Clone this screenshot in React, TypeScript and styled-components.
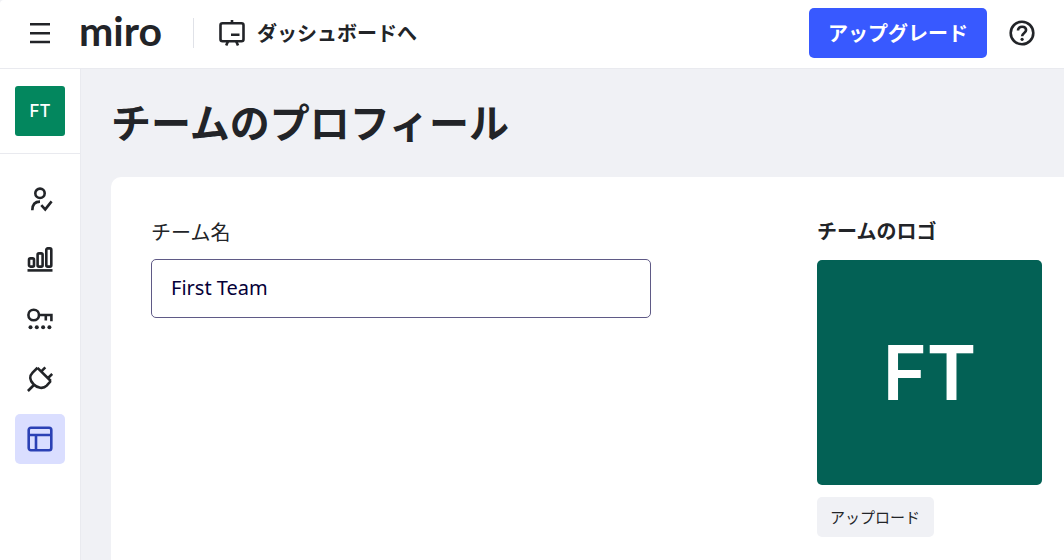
import React from "react";
import styled, { createGlobalStyle } from "styled-components";

const GlobalStyle = createGlobalStyle`
  *, *::before, *::after { box-sizing: border-box; }
  body {
    margin: 0;
    background: #f0f1f5;
    color: #222428;
    font-family: "Noto Sans", "Noto Sans CJK JP", sans-serif;
    font-size: 20px;
    line-height: 30px;
  }
  button, input { font: inherit; color: inherit; }
  h1, h2 { margin: 0; }
`;

const Page = styled.div`
  min-height: 100vh;
  display: flex;
  flex-direction: column;
`;

const Header = styled.header`
  display: flex;
  align-items: center;
  padding: 8px 29px 10px;
  background: #fff;
  border-bottom: 1px solid #e9eaef;
  border-top-left-radius: 4px;
`;

const IconButton = styled.button`
  display: flex;
  padding: 0;
  border: 0;
  background: none;
  cursor: pointer;
`;

const Logo = styled.a`
  margin-left: 28px;
  padding-bottom: 4px;
  color: #222428;
  font-family: Lato, sans-serif;
  font-size: 41px;
  font-weight: 700;
  line-height: 46px;
  text-decoration: none;
`;

const Divider = styled.div`
  width: 1px;
  height: 30px;
  margin: 0 25px 0 31px;
  background: #e0e2e8;
`;

const DashboardLink = styled.a`
  display: flex;
  align-items: center;
  gap: 12px;
  color: #222428;
  font-family: "Noto Sans CJK JP", sans-serif;
  font-weight: 700;
  text-decoration: none;
`;

const HeaderActions = styled.div`
  display: flex;
  align-items: center;
  gap: 22px;
  margin-left: auto;
`;

const UpgradeButton = styled.button`
  height: 50px;
  padding: 0 19px;
  border: 0;
  border-radius: 5px;
  background: #3859ff;
  color: #fff;
  font-family: "Noto Sans CJK JP", sans-serif;
  font-weight: 700;
  cursor: pointer;
`;

const Body = styled.div`
  display: flex;
  flex: 1;
`;

const Sidebar = styled.aside`
  flex: none;
  width: 81px;
  background: #fff;
  border-right: 1px solid #e9eaef;
`;

const TeamSlot = styled.div`
  display: flex;
  justify-content: center;
  padding: 17px 0;
  border-bottom: 1px solid #e9eaef;
`;

const Avatar = styled.div<{ $large?: boolean }>`
  display: flex;
  align-items: center;
  justify-content: center;
  width: ${(p) => (p.$large ? 225 : 50)}px;
  height: ${(p) => (p.$large ? 225 : 50)}px;
  border-radius: ${(p) => (p.$large ? 5 : 3)}px;
  background: ${(p) => (p.$large ? "#036155" : "#03875e")};
  color: #fff;
  font-family: Inter, sans-serif;
  font-size: ${(p) => (p.$large ? 75 : 17)}px;
  font-weight: ${(p) => (p.$large ? 600 : 500)};
  line-height: 1;
`;

const Nav = styled.nav`
  display: flex;
  flex-direction: column;
  align-items: center;
  gap: 10px;
  padding-top: 20px;
`;

const NavLink = styled.a<{ $active?: boolean }>`
  display: flex;
  align-items: center;
  justify-content: center;
  width: 50px;
  height: 50px;
  border-radius: 5px;
  color: ${(p) => (p.$active ? "#2b41b5" : "#222428")};
  background: ${(p) => (p.$active ? "#dadeff" : "transparent")};
`;

const Main = styled.main`
  display: flex;
  flex-direction: column;
  flex: 1;
  min-width: 0;
  padding: 22px 0 0 30px;
`;

const Title = styled.h1`
  font-family: "Noto Sans CJK JP", sans-serif;
  font-size: 40px;
  font-weight: 700;
  line-height: 60px;
`;

const Card = styled.section`
  display: flex;
  justify-content: space-between;
  gap: 40px;
  flex: 1;
  margin-top: 26px;
  padding: 40px 22px 23px 40px;
  border-top-left-radius: 10px;
  background: #fff;
`;

const Field = styled.div`
  display: flex;
  flex-direction: column;
  flex: 0 1 500px;
  min-width: 0;
`;

const Label = styled.label`
  margin-bottom: 12px;
  font-family: "Noto Sans CJK JP", sans-serif;
`;

const TextInput = styled.input`
  width: 100%;
  height: 59px;
  padding: 0 19px 2px;
  border: 1px solid #5f5a86;
  border-radius: 5px;
  background: #fff;
  color: #050038;
`;

const LogoPanel = styled.div`
  display: flex;
  flex-direction: column;
  align-items: flex-start;
  flex: none;
`;

const PanelTitle = styled.h2`
  margin-bottom: 15px;
  font-family: "Noto Sans CJK JP", sans-serif;
  font-size: 20px;
  font-weight: 700;
  line-height: 28px;
`;

const UploadButton = styled.button`
  height: 40px;
  margin-top: 12px;
  padding: 0 14px 0 13px;
  border: 0;
  border-radius: 5px;
  background: #f0f1f5;
  font-family: "Noto Sans CJK JP", sans-serif;
  font-size: 15px;
  cursor: pointer;
`;

function Icon({ children }: { children: React.ReactNode }) {
  return (
    <svg width="26" height="26" viewBox="0 0 26 26" fill="none" stroke="currentColor" strokeWidth="2.6" aria-hidden="true">
      {children}
    </svg>
  );
}

const navItems = [
  {
    label: "ユーザー",
    icon: (
      <>
        <circle cx="13" cy="7.3" r="4.7" />
        <path d="M5.3 24.2c0-5.4 2.8-8.6 7.7-8.6M14.3 19.2l3.9 4.2 6.4-8" />
      </>
    ),
  },
  {
    label: "統計",
    icon: (
      <>
        <rect x="2" y="12.4" width="5" height="8.2" rx="1.4" />
        <rect x="10.6" y="7.4" width="5" height="13.2" rx="1.4" />
        <rect x="19.3" y="2.4" width="5" height="18.2" rx="1.4" />
        <path d="M.5 24.4h25" />
      </>
    ),
  },
  {
    label: "セキュリティ",
    icon: (
      <>
        <circle cx="6.7" cy="9" r="5.3" />
        <path d="M12 9h12.4v6.3M18.8 9v5.4" />
        <g fill="currentColor" stroke="none">
          <circle cx="3.5" cy="21.2" r="2" />
          <circle cx="9.8" cy="21.2" r="2" />
          <circle cx="16.1" cy="21.2" r="2" />
          <circle cx="22.4" cy="21.2" r="2" />
        </g>
      </>
    ),
  },
  {
    label: "アプリ",
    icon: (
      <path
        d="M.9 25l7-7M10.5 1.8l13.3 13.2M14.3 5.4l4-4M20.8 12.2l4.4-4.2M10.5 1.8L5.6 6.6c-3.4 3.5-2.9 8 .9 11.7 3.8 3.8 9.6 5 13.2 1.4l4.1-4.7"
        strokeLinejoin="round"
      />
    ),
  },
  {
    label: "プロフィール",
    active: true,
    icon: (
      <>
        <rect x="1.7" y="1.7" width="22.6" height="22.6" rx="2.2" />
        <path d="M1.7 9h22.6M9 9v15.3" />
      </>
    ),
  },
];

export default function App() {
  return (
    <>
      <GlobalStyle />
      <Page>
        <Header>
          <IconButton aria-label="メニュー">
            <svg width="22" height="22" viewBox="0 0 22 22" stroke="#222428" strokeWidth="2.4" aria-hidden="true">
              <path d="M1 2.2h20M1 11.2h20M1 20h20" />
            </svg>
          </IconButton>
          <Logo href="#">miro</Logo>
          <Divider />
          <DashboardLink href="#">
            <Icon>
              <rect x="1.5" y="3.3" width="23" height="18" rx="2" />
              <path d="M13 0v3.3M9 21.3l-1.8 4.1M17.2 21.3l1.8 4.1M12 14.8h8.5" />
            </Icon>
            ダッシュボードへ
          </DashboardLink>
          <HeaderActions>
            <UpgradeButton>アップグレード</UpgradeButton>
            <IconButton aria-label="ヘルプ">
              <Icon>
                <circle cx="13" cy="13" r="11.3" />
                <path d="M9 10.6c0-2.4 1.7-3.9 4.1-3.9 2.3 0 4 1.3 4 3.4 0 2.9-4 2.9-4 6.2" />
                <circle cx="13.1" cy="19.3" r="1.6" fill="currentColor" stroke="none" />
              </Icon>
            </IconButton>
          </HeaderActions>
        </Header>
        <Body>
          <Sidebar>
            <TeamSlot>
              <Avatar>FT</Avatar>
            </TeamSlot>
            <Nav>
              {navItems.map((item) => (
                <NavLink key={item.label} href="#" aria-label={item.label} $active={item.active}>
                  <Icon>{item.icon}</Icon>
                </NavLink>
              ))}
            </Nav>
          </Sidebar>
          <Main>
            <Title>チームのプロフィール</Title>
            <Card>
              <Field>
                <Label htmlFor="team-name">チーム名</Label>
                <TextInput id="team-name" type="text" defaultValue="First Team" />
              </Field>
              <LogoPanel>
                <PanelTitle>チームのロゴ</PanelTitle>
                <Avatar $large>FT</Avatar>
                <UploadButton>アップロード</UploadButton>
              </LogoPanel>
            </Card>
          </Main>
        </Body>
      </Page>
    </>
  );
}
